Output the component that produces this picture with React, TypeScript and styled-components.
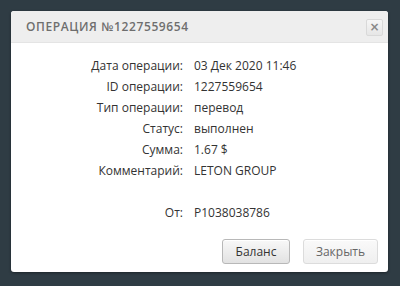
import styled, { createGlobalStyle } from "styled-components";

const GlobalStyle = createGlobalStyle`
  html, body {
    margin: 0;
    padding: 0;
    background: #2f3c44;
  }
  body {
    font-family: "Open Sans", "Liberation Sans", sans-serif;
  }
`;

const Screen = styled.div`
  width: 400px;
  height: 286px;
  padding: 11px 12px 14px 11px;
  box-sizing: border-box;
`;

const Modal = styled.div`
  background: #ffffff;
  border-radius: 3px;
  height: 261px;
  display: flex;
  flex-direction: column;
  overflow: hidden;
  box-shadow: 0 1px 3px rgba(0, 0, 0, 0.4);
`;

const Header = styled.div`
  background: #eeeeee;
  height: 31px;
  display: flex;
  align-items: center;
  justify-content: space-between;
  padding: 0 5px 0 15px;
  border-bottom: 1px solid #e4e4e4;
`;

const Title = styled.h3`
  margin: 0;
  font-size: 12px;
  font-weight: 600;
  letter-spacing: 0.6px;
  color: #6e6e6e;
`;

const CloseBtn = styled.button`
  width: 17px;
  height: 17px;
  padding: 0;
  border: 1px solid #d9d9d9;
  border-radius: 2px;
  background: linear-gradient(#f6f6f6, #e6e6e6);
  color: #888;
  font-size: 12px;
  font-weight: 700;
  line-height: 14px;
  font-family: "DejaVu Sans", sans-serif;
  display: flex;
  align-items: center;
  justify-content: center;
  margin-top: 1px;
`;

const Body = styled.div`
  flex: 1;
  padding: 12px 0 0;
  display: flex;
  flex-direction: column;
`;

const Details = styled.dl`
  margin: 0;
  display: grid;
  grid-template-columns: 172px 1fr;
  column-gap: 11px;
  font-size: 12px;
  color: #333;
`;

const Label = styled.dt<{ $gap?: number }>`
  text-align: right;
  line-height: 21px;
  margin-top: ${(p) => p.$gap ?? 0}px;
`;

const Value = styled.dd<{ $gap?: number }>`
  margin: 0;
  line-height: 21px;
  margin-top: ${(p) => p.$gap ?? 0}px;
`;

const Footer = styled.div`
  display: flex;
  justify-content: flex-end;
  gap: 13px;
  padding: 0 10px 0 0;
  margin-top: 16px;
`;

const Button = styled.button<{ $primary?: boolean }>`
  height: 25px;
  padding: 0;
  width: ${(p) => (p.$primary ? 68 : 75)}px;
  font-family: inherit;
  font-size: 12px;
  border-radius: 3px;
  border: 1px solid ${(p) => (p.$primary ? "#b8b8b8" : "#dcdcdc")};
  background: ${(p) =>
    p.$primary ? "linear-gradient(#f8f8f8, #e2e2e2)" : "linear-gradient(#fafafa, #efefef)"};
  color: ${(p) => (p.$primary ? "#333" : "#666")};
  box-shadow: inset 0 1px 0 #fff;
`;

const rows: [string, string][] = [
  ["Дата операции:", "03 Дек 2020 11:46"],
  ["ID операции:", "1227559654"],
  ["Тип операции:", "перевод"],
  ["Статус:", "выполнен"],
  ["Сумма:", "1.67 $"],
  ["Комментарий:", "LETON GROUP"],
];

export default function App() {
  return (
    <>
      <GlobalStyle />
      <Screen>
        <Modal>
          <Header>
            <Title>ОПЕРАЦИЯ №1227559654</Title>
            <CloseBtn>×</CloseBtn>
          </Header>
          <Body>
            <Details>
              {rows.map(([k, v]) => [
                <Label key={k}>{k}</Label>,
                <Value key={k + "v"}>{v}</Value>,
              ])}
              <Label $gap={21}>От:</Label>
              <Value $gap={21}>P1038038786</Value>
            </Details>
            <Footer>
              <Button $primary>Баланс</Button>
              <Button>Закрыть</Button>
            </Footer>
          </Body>
        </Modal>
      </Screen>
    </>
  );
}
